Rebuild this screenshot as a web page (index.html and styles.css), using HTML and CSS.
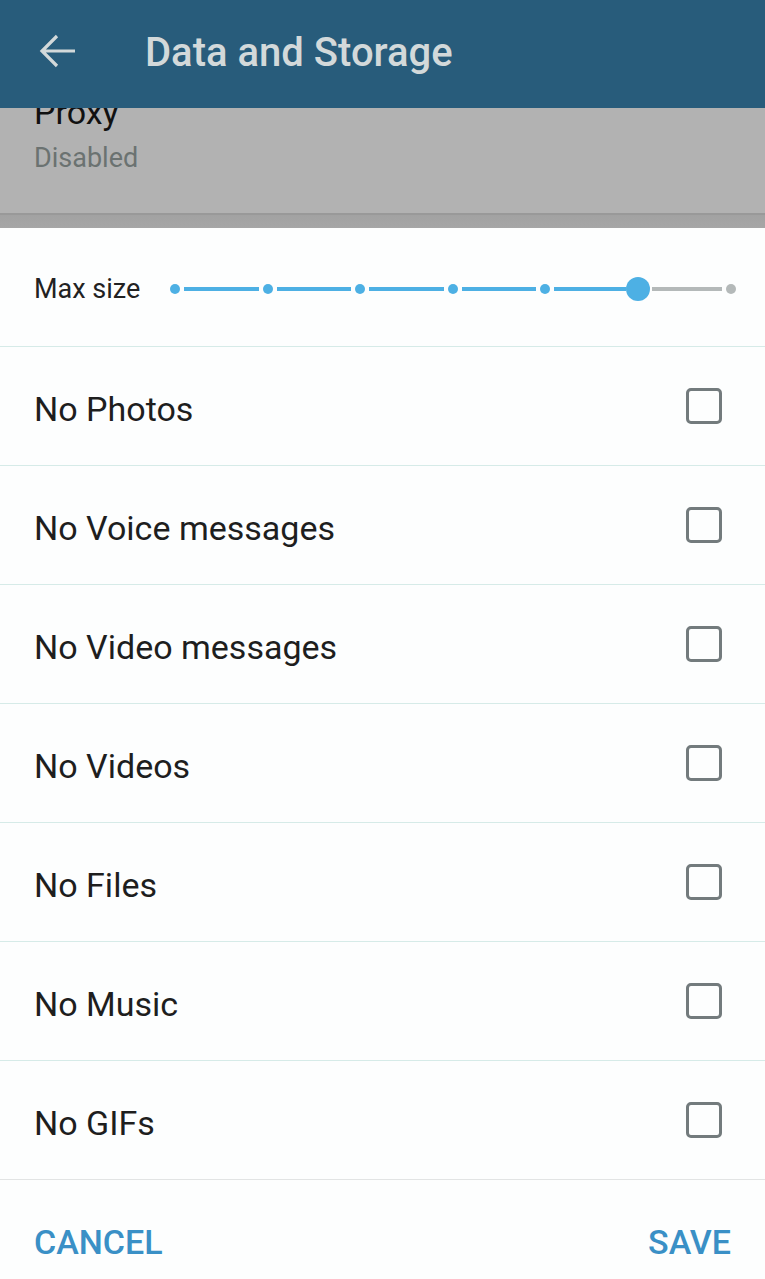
FILE: index.html
```html
<!DOCTYPE html>
<html>
	<head>
		<title>Data and Storage</title>
		<link rel="stylesheet" href="styles.css">
	</head>
	<body>
		<div class="toolbar">
			<svg class="back" width="38" height="36" viewBox="0 0 38 36"><path d="M37 18H4M19 3L4 18l15 15" fill="none" stroke="currentColor" stroke-width="3.2"/></svg>
			<span class="toolbar-title">Data and Storage</span>
		</div>
		<div class="behind">
			<div class="proxy-title">Proxy</div>
			<div class="proxy-value">Disabled</div>
		</div>
		<div class="behind-shadow"></div>

		<div class="dialog">
			<div class="size-row">
				<span class="size-label">Max size</span>
				<svg class="slider" width="572" height="30" viewBox="0 0 572 30">
					<g stroke="#4db0e4" stroke-width="4">
						<line x1="16" y1="15" x2="91" y2="15"/>
						<line x1="109" y1="15" x2="183" y2="15"/>
						<line x1="201" y1="15" x2="276" y2="15"/>
						<line x1="294" y1="15" x2="368" y2="15"/>
						<line x1="386" y1="15" x2="458" y2="15"/>
					</g>
					<line x1="484" y1="15" x2="554" y2="15" stroke="#b4b9b9" stroke-width="4"/>
					<g fill="#4db0e4">
						<circle cx="7" cy="15" r="5"/>
						<circle cx="100" cy="15" r="5"/>
						<circle cx="192" cy="15" r="5"/>
						<circle cx="285" cy="15" r="5"/>
						<circle cx="377" cy="15" r="5"/>
						<circle cx="470" cy="15" r="12"/>
					</g>
					<circle cx="563" cy="15" r="5" fill="#b4b9b9"/>
				</svg>
			</div>
			<div class="option"><span class="option-text">No Photos</span><span class="check"></span></div>
			<div class="option"><span class="option-text">No Voice messages</span><span class="check"></span></div>
			<div class="option"><span class="option-text">No Video messages</span><span class="check"></span></div>
			<div class="option"><span class="option-text">No Videos</span><span class="check"></span></div>
			<div class="option"><span class="option-text">No Files</span><span class="check"></span></div>
			<div class="option"><span class="option-text">No Music</span><span class="check"></span></div>
			<div class="option"><span class="option-text">No GIFs</span><span class="check"></span></div>
			<div class="buttons">
				<span class="btn">CANCEL</span>
				<span class="btn">SAVE</span>
			</div>
		</div>
	</body>
</html>
```

FILE: styles.css
```css
body
{
	margin: 0;
	background-color: #fdfefe;
	font-family: Roboto, "Noto Sans", sans-serif;
	overflow: hidden;
}

.toolbar
{
	height: 108px;
	background-color: #285c7b;
	display: flex;
	align-items: center;
	color: #d3d9da;
	padding-left: 38px;
	box-sizing: border-box;
}

.back
{
	margin-top: -6px;
}

.toolbar-title
{
	margin-left: 69px;
	font-size: 40px;
	font-weight: 500;
	margin-top: -4px;
}

.behind
{
	height: 105px;
	background-color: #b2b2b2;
	padding-left: 34px;
	overflow: hidden;
	border-bottom: 2px solid #999999;
}

.proxy-title
{
	font-size: 34px;
	color: #111111;
	margin-top: -16px;
	line-height: 40px;
}

.proxy-value
{
	font-size: 27px;
	color: #6b7271;
	margin-top: 10px;
}

.behind-shadow
{
	height: 13px;
	background: linear-gradient(#a2a2a2, #a6a6a6);
}

.size-row
{
	height: 118px;
	display: flex;
	align-items: center;
	padding-left: 34px;
	border-bottom: 1px solid #d6ebe8;
}

.size-label
{
	font-size: 27px;
	color: #222222;
	width: 134px;
	margin-top: 4px;
}

.slider
{
	margin-top: 4px;
}

.option
{
	height: 118px;
	display: flex;
	align-items: center;
	justify-content: space-between;
	padding: 0 43px 0 34px;
	border-bottom: 1px solid #d6ebe8;
	font-size: 34px;
	color: #1e1e1e;
}

.option-text
{
	margin-top: 6px;
}

.check
{
	width: 30px;
	height: 30px;
	border: 3px solid #737b7d;
	border-radius: 5px;
}

.buttons
{
	display: flex;
	justify-content: space-between;
	padding: 0 34px;
	height: 99px;
	align-items: center;
	border-top: 1px solid #e2e4e4;
	margin-top: -1px;
}

.btn
{
	color: #3a90c6;
	font-size: 34px;
	font-weight: 500;
	margin-top: 24px;
}
```
